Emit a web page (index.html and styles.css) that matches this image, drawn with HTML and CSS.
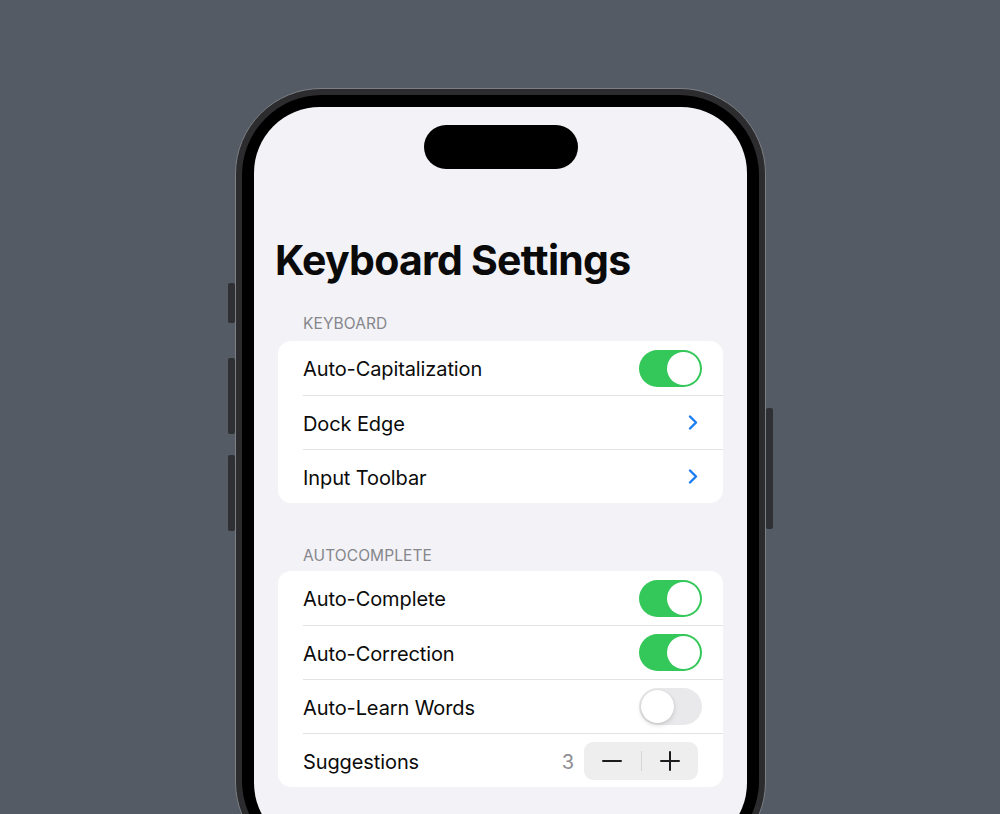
FILE: index.html
```html
<!DOCTYPE html>
<html lang="en">
<head>
<meta charset="utf-8">
<title>Keyboard Settings</title>
<link rel="stylesheet" href="styles.css">
</head>
<body>
<div class="stage">
  <div class="phone">
    <span class="btn btn-action"></span>
    <span class="btn btn-vol-up"></span>
    <span class="btn btn-vol-down"></span>
    <span class="btn btn-power"></span>
    <div class="bezel">
      <div class="screen">
        <div class="island"></div>
        <h1 class="title">Keyboard Settings</h1>

        <section class="group">
          <div class="group-header">KEYBOARD</div>
          <div class="card">
            <div class="row">
              <span class="label">Auto-Capitalization</span>
              <span class="toggle on"><span class="knob"></span></span>
            </div>
            <div class="row">
              <span class="label">Dock Edge</span>
              <svg class="chevron" width="10" height="15" viewBox="0 0 10 15"><path d="M2 1.5 L8 7.5 L2 13.5" fill="none" stroke="#1a7ef2" stroke-width="2.4" stroke-linecap="round" stroke-linejoin="round"/></svg>
            </div>
            <div class="row">
              <span class="label">Input Toolbar</span>
              <svg class="chevron" width="10" height="15" viewBox="0 0 10 15"><path d="M2 1.5 L8 7.5 L2 13.5" fill="none" stroke="#1a7ef2" stroke-width="2.4" stroke-linecap="round" stroke-linejoin="round"/></svg>
            </div>
          </div>
        </section>

        <section class="group">
          <div class="group-header">AUTOCOMPLETE</div>
          <div class="card">
            <div class="row">
              <span class="label">Auto-Complete</span>
              <span class="toggle on"><span class="knob"></span></span>
            </div>
            <div class="row">
              <span class="label">Auto-Correction</span>
              <span class="toggle on"><span class="knob"></span></span>
            </div>
            <div class="row">
              <span class="label">Auto-Learn Words</span>
              <span class="toggle off"><span class="knob"></span></span>
            </div>
            <div class="row">
              <span class="label">Suggestions</span>
              <div class="stepper-wrap">
                <span class="value">3</span>
                <div class="stepper">
                  <span class="step"><svg width="20" height="20" viewBox="0 0 20 20"><path d="M1 10 H19" stroke="#1c1c1e" stroke-width="2" stroke-linecap="round"/></svg></span>
                  <span class="step-divider"></span>
                  <span class="step"><svg width="20" height="20" viewBox="0 0 20 20"><path d="M1 10 H19 M10 1 V19" stroke="#1c1c1e" stroke-width="2" stroke-linecap="round"/></svg></span>
                </div>
              </div>
            </div>
          </div>
        </section>
      </div>
    </div>
  </div>
</div>
</body>
</html>
```

FILE: styles.css
```css
* { box-sizing: border-box; }
html, body {
  margin: 0;
  padding: 0;
  height: 814px;
  overflow: hidden;
  background: #545b64;
  font-family: "Inter", "Liberation Sans", sans-serif;
}
.stage {
  display: flex;
  justify-content: center;
  padding-top: 88px;
  padding-left: 1px;
  height: 814px;
  overflow: hidden;
}
.phone {
  position: relative;
  flex: none;
  width: 531px;
  height: 780px;
  border-radius: 86px;
  background: #2c2c2e;
  border: 1px solid #7c7f84;
  padding: 6px;
}
.btn {
  position: absolute;
  width: 7px;
  background: #2f3034;
  border-radius: 2px;
}
.btn-action { left: -8px; top: 194px; height: 40px; }
.btn-vol-up { left: -8px; top: 269px; height: 76px; }
.btn-vol-down { left: -8px; top: 366px; height: 76px; }
.btn-power { right: -8px; top: 319px; height: 121px; }
.bezel {
  height: 100%;
  background: #000;
  border-radius: 80px;
  padding: 12px;
}
.screen {
  height: 100%;
  background: #f2f2f7;
  border-radius: 66px;
  padding: 18px 24px 0 24px;
  display: flex;
  flex-direction: column;
}
.island {
  align-self: center;
  width: 154px;
  height: 44px;
  border-radius: 22px;
  background: #000;
}
.title {
  margin: 66px 0 0 -3px;
  font-size: 41px;
  line-height: 50px;
  font-weight: 700;
  color: #0a0a0a;
  letter-spacing: -0.75px;
}
.group { margin-top: 30px; }
.group + .group { margin-top: 44px; }
.group-header {
  padding-left: 25px;
  font-size: 15.5px;
  line-height: 18px;
  color: #86868b;
  letter-spacing: 0.1px;
  margin-bottom: 8px;
}
.group + .group .group-header { margin-bottom: 6px; }
.card {
  background: #fff;
  border-radius: 13px;
  overflow: hidden;
}
.row {
  height: 54px;
  margin-left: 25px;
  padding-right: 21px;
  padding-top: 2px;
  display: flex;
  align-items: center;
  justify-content: space-between;
  border-top: 1px solid #e3e3e6;
}
.row:first-child { border-top: none; }
.label {
  font-size: 20px;
  color: #0b0b0b;
  letter-spacing: -0.1px;
}
.toggle {
  position: relative;
  width: 63px;
  height: 37px;
  margin-top: -2px;
  border-radius: 19px;
  display: block;
}
.toggle.on { background: #34c759; }
.toggle.off { background: #e9e9eb; }
.knob {
  position: absolute;
  top: 2px;
  width: 33px;
  height: 33px;
  border-radius: 50%;
  background: #fff;
}
.toggle.on .knob { right: 2px; }
.toggle.off .knob { left: 2px; box-shadow: 0 2px 5px rgba(0,0,0,0.15), 0 0 1px rgba(0,0,0,0.12); }
.chevron { margin-right: 4px; margin-top: -2px; display: block; }
.stepper-wrap {
  display: flex;
  align-items: center;
  gap: 10px;
  margin-right: 4px;
  margin-top: -2px;
}
.value {
  font-size: 20px;
  color: #8e8e93;
  padding-top: 2px;
}
.stepper {
  width: 114px;
  height: 38px;
  border-radius: 9px;
  background: #eeeeef;
  display: flex;
  align-items: center;
}
.step {
  flex: 1;
  display: flex;
  justify-content: center;
  align-items: center;
}
.step-divider {
  width: 1px;
  height: 20px;
  background: #d6d6d9;
}
```
